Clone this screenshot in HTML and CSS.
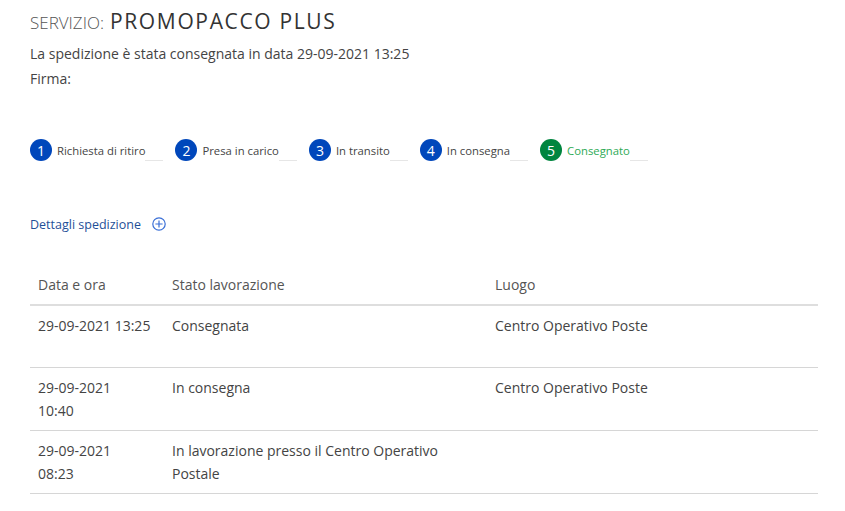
FILE: index.html
```html
<!DOCTYPE html>
<html lang="it">
<head>
<meta charset="utf-8">
<link rel="stylesheet" href="styles.css">
</head>
<body>
<div class="page">
  <h1 class="title"><span class="title-label">SERVIZIO:</span><span class="title-name">PROMOPACCO PLUS</span></h1>
  <p class="info first">La spedizione è stata consegnata in data 29-09-2021 13:25</p>
  <p class="info">Firma:</p>

  <ol class="steps">
    <li class="step"><span class="num">1</span><span class="label">Richiesta di ritiro</span></li>
    <li class="step"><span class="num">2</span><span class="label">Presa in carico</span></li>
    <li class="step"><span class="num">3</span><span class="label">In transito</span></li>
    <li class="step"><span class="num">4</span><span class="label">In consegna</span></li>
    <li class="step done"><span class="num">5</span><span class="label">Consegnato</span></li>
  </ol>

  <div class="details">
    <span class="details-text">Dettagli spedizione</span>
    <svg class="plus" width="14" height="14" viewBox="0 0 14 14"><circle cx="7" cy="7" r="6.2" fill="none" stroke="#3a6fd6" stroke-width="1.2"/><path d="M7 3.4V10.6M3.4 7H10.6" stroke="#3a6fd6" stroke-width="1.2"/></svg>
  </div>

  <table class="tracking">
    <thead>
      <tr><th class="c1">Data e ora</th><th class="c2">Stato lavorazione</th><th class="c3">Luogo</th></tr>
    </thead>
    <tbody>
      <tr><td>29-09-2021 13:25</td><td>Consegnata</td><td>Centro Operativo Poste</td></tr>
      <tr><td>29-09-2021<br>10:40</td><td>In consegna</td><td>Centro Operativo Poste</td></tr>
      <tr><td>29-09-2021<br>08:23</td><td>In lavorazione presso il Centro Operativo Postale</td><td></td></tr>
    </tbody>
  </table>
</div>
</body>
</html>
```
FILE: styles.css
```css
* { box-sizing: border-box; }
body {
  margin: 0;
  background: #fff;
  font-family: "Open Sans", Lato, sans-serif;
  color: #444;
}
.page {
  padding: 7px 27px 0 30px;
}
.title {
  margin: 0;
  height: 28px;
  display: flex;
  align-items: baseline;
  gap: 6px;
  line-height: 28px;
  font-weight: 400;
  white-space: nowrap;
}
.title-label {
  font-size: 17px;
  font-weight: 300;
  color: #555;
}
.title-name {
  font-size: 21px;
  font-weight: 500;
  color: #333;
  letter-spacing: 1.65px;
}
.info {
  margin: 0;
  font-size: 14px;
  line-height: 25px;
  color: #444;
}
.info.first { margin-top: 6px; }

.steps {
  list-style: none;
  margin: 48px 0 0;
  padding: 0;
  display: flex;
  gap: 12px;
}
.step {
  display: flex;
  align-items: center;
  height: 22px;
}
.num {
  width: 22px;
  height: 22px;
  border-radius: 50%;
  background: #0047bb;
  color: #fff;
  font-size: 14px;
  display: flex;
  align-items: center;
  justify-content: center;
  flex-shrink: 0;
}
.label {
  margin-left: 5px;
  font-size: 11.3px;
  color: #444;
  display: flex;
  align-items: center;
}
.label::after {
  content: "";
  width: 18px;
  height: 1px;
  background: #e6e6e6;
  align-self: flex-end;
  margin-bottom: -3px;
}
.done .num { background: #00853f; }
.done .label { color: #2eaa55; }

.details {
  margin-top: 54px;
  display: flex;
  align-items: center;
  gap: 11px;
  height: 18px;
}
.details-text {
  font-size: 12.5px;
  color: #1f4f98;
}
.plus { display: block; }

.tracking {
  margin-top: 32px;
  width: 788px;
  border-collapse: collapse;
  font-size: 14px;
  color: #444;
}
.tracking th {
  text-align: left;
  font-weight: 400;
  color: #555;
  height: 40px;
  padding: 0 8px;
  vertical-align: middle;
  border-bottom: 2px solid #dedede;
}
.tracking td {
  vertical-align: top;
  padding: 8px 8px;
  line-height: 23px;
  height: 62px;
  border-bottom: 1px solid #d6d6d6;
}
.c1 { width: 134px; }
.c2 { width: 323px; }
.tracking td:first-child { padding-right: 8px; white-space: nowrap; }
```
